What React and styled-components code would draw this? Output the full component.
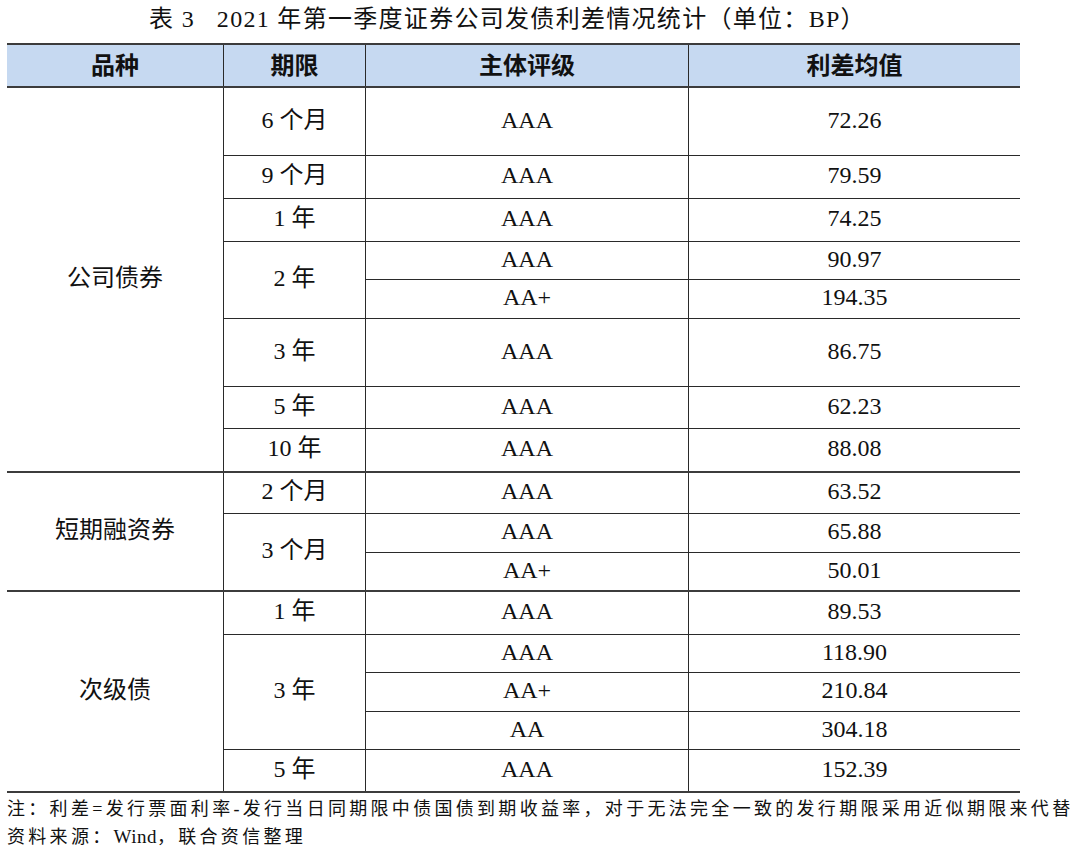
import React from 'react'
import styled, { createGlobalStyle } from 'styled-components';

const GlobalStyle = createGlobalStyle`
  * {
    box-sizing: border-box;
  }
  body {
    margin: 0;
    background: #ffffff;
    color: #111111;
    font-family: "Liberation Serif", "Noto Sans CJK SC", serif;
  }
`;

// height of every rating row is the distance between two rule lines
const groups = [
  {
    kind: '公司债券',
    terms: [
      { term: '6 个月', rows: [['AAA', '72.26', 67]] },
      { term: '9 个月', rows: [['AAA', '79.59', 43]] },
      { term: '1 年', rows: [['AAA', '74.25', 43]] },
      { term: '2 年', rows: [['AAA', '90.97', 38], ['AA+', '194.35', 39]] },
      { term: '3 年', rows: [['AAA', '86.75', 68]] },
      { term: '5 年', rows: [['AAA', '62.23', 42]] },
      { term: '10 年', rows: [['AAA', '88.08', 43]] },
    ],
  },
  {
    kind: '短期融资券',
    terms: [
      { term: '2 个月', rows: [['AAA', '63.52', 40]] },
      { term: '3 个月', rows: [['AAA', '65.88', 39], ['AA+', '50.01', 38]] },
    ],
  },
  {
    kind: '次级债',
    terms: [
      { term: '1 年', rows: [['AAA', '89.53', 42]] },
      { term: '3 年', rows: [['AAA', '118.90', 38], ['AA+', '210.84', 39], ['AA', '304.18', 38]] },
      { term: '5 年', rows: [['AAA', '152.39', 42]] },
    ],
  },
];

const App = () => {
  return (
    <>
      <GlobalStyle />
      <Page>
        <Title>表 3&nbsp;&nbsp;&nbsp;2021 年第一季度证券公司发债利差情况统计（单位：BP）</Title>
        <Table>
          <HeaderRow>
            <HeadCell $w={217} $line>品种</HeadCell>
            <HeadCell $w={142} $line>期限</HeadCell>
            <HeadCell $w={323} $line>主体评级</HeadCell>
            <HeadCell>利差均值</HeadCell>
          </HeaderRow>
          {groups.map((g) => (
            <Group key={g.kind}>
              <KindCell>{g.kind}</KindCell>
              <Terms>
                {g.terms.map((t, i) => (
                  <TermRow key={t.term} $first={i === 0}>
                    <TermCell>{t.term}</TermCell>
                    <Ratings>
                      {t.rows.map(([rating, value, h], j) => (
                        // the term's top rule already takes one pixel
                        <RatingRow key={rating} $first={j === 0} $h={i > 0 && j === 0 ? h - 1 : h}>
                          <RatingCell>{rating}</RatingCell>
                          <ValueCell>{value}</ValueCell>
                        </RatingRow>
                      ))}
                    </Ratings>
                  </TermRow>
                ))}
              </Terms>
            </Group>
          ))}
        </Table>
        <Notes>
          <NoteLine>注：利差=发行票面利率-发行当日同期限中债国债到期收益率，对于无法完全一致的发行期限采用近似期限来代替</NoteLine>
          <NoteLine>资料来源：<Latin>Wind</Latin>，联合资信整理</NoteLine>
        </Notes>
      </Page>
    </>
  )
}

export default App;


const Page = styled.div`
  width: 1080px;
  padding-left: 7px;
`;

const Title = styled.div`
  width: 1013px;
  height: 43px;
  padding-right: 12px;
  padding-bottom: 6px;

  display: flex;
  align-items: center;
  justify-content: center;

  font-size: 24px;
  line-height: 1;
  letter-spacing: 1.3px;
  white-space: nowrap;
  color: #111;
`;

const Table = styled.div`
  width: 1013px;
  display: flex;
  flex-direction: column;
  font-size: 24px;
  line-height: 1;
`;

const HeaderRow = styled.div`
  height: 45px;
  display: flex;
  background: #c6d9f1;
  border-top: 2px solid #3c3c3c;
  border-bottom: 2px solid #3c3c3c;
`;

const HeadCell = styled.div`
  ${(p) => (p.$w ? `width: ${p.$w}px;` : 'flex: 1;')}
  ${(p) => p.$line && 'border-right: 1px solid #2a2a2a;'}

  display: flex;
  align-items: center;
  justify-content: center;
  padding-bottom: 4px;

  font-family: "Noto Sans CJK SC", sans-serif;
  font-weight: 700;
  font-size: 24px;
  color: #111;
`;

const Group = styled.div`
  display: flex;
  border-bottom: 2px solid #3c3c3c;
`;

const Cell = styled.div`
  display: flex;
  align-items: center;
  justify-content: center;
  padding-bottom: 4px;
`;

const KindCell = styled(Cell)`
  width: 217px;
  border-right: 1px solid #2a2a2a;
`;

const Terms = styled.div`
  flex: 1;
  display: flex;
  flex-direction: column;
`;

const TermRow = styled.div`
  display: flex;
  ${(p) => !p.$first && 'border-top: 1px solid #2a2a2a;'}
`;

const TermCell = styled(Cell)`
  width: 142px;
  border-right: 1px solid #2a2a2a;
`;

const Ratings = styled.div`
  flex: 1;
  display: flex;
  flex-direction: column;
`;

const RatingRow = styled.div`
  display: flex;
  height: ${(p) => p.$h}px;
  ${(p) => !p.$first && 'border-top: 1px solid #2a2a2a;'}
`;

const RatingCell = styled(Cell)`
  width: 323px;
  border-right: 1px solid #2a2a2a;
`;

const ValueCell = styled(Cell)`
  flex: 1;
`;

const Notes = styled.div`
  padding-top: 3px;
`;

const NoteLine = styled.div`
  height: 27px;
  line-height: 27px;
  font-size: 18px;
  letter-spacing: 3.3px;
  white-space: nowrap;
  color: #111;
`;

const Latin = styled.span`
  font-size: 19px;
  letter-spacing: 0.5px;
`;
